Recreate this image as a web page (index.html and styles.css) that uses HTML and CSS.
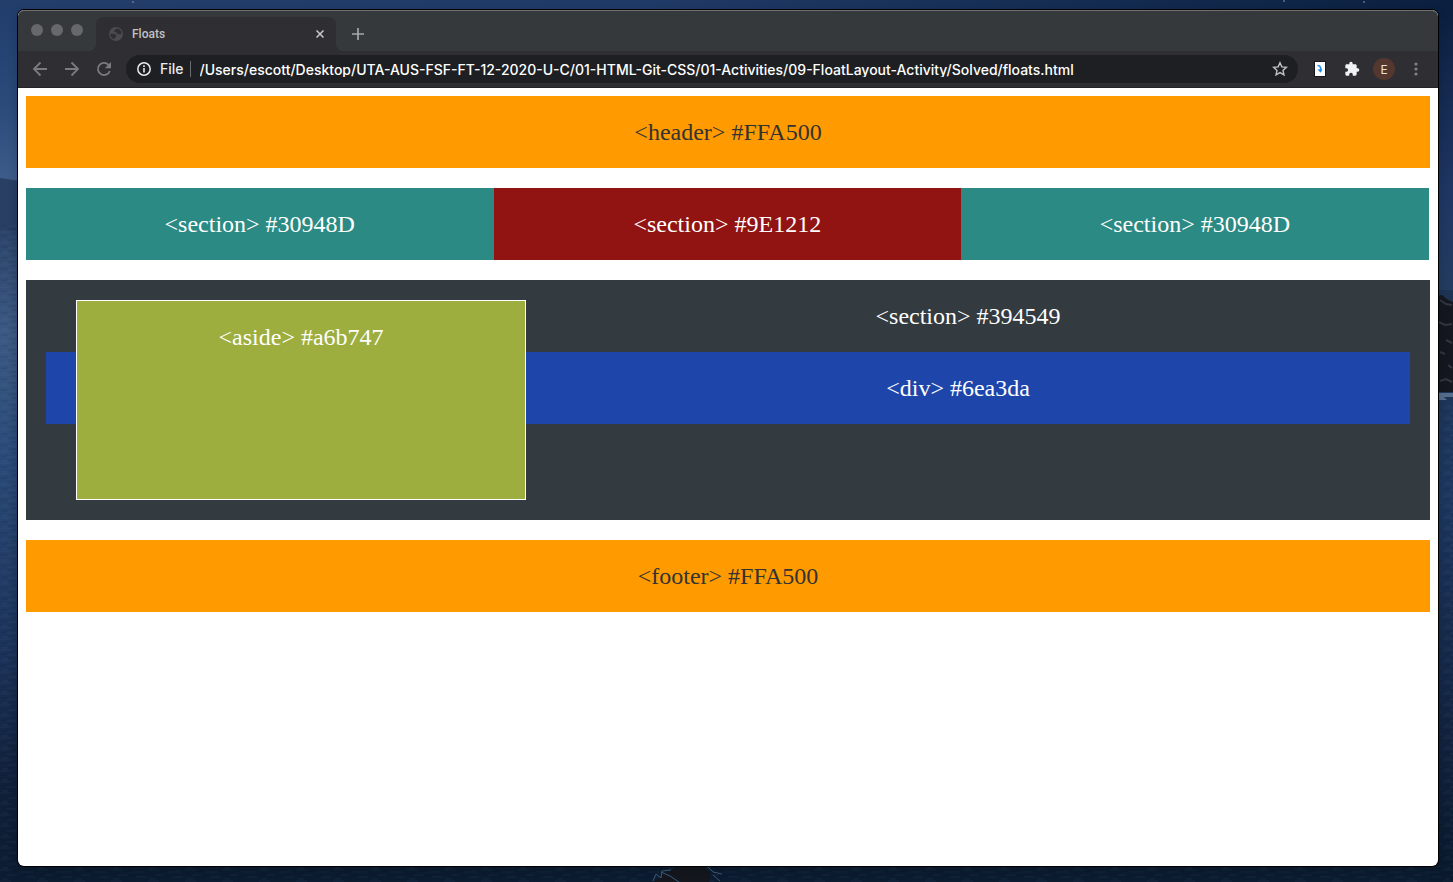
FILE: index.html
```html
<!DOCTYPE html>
<html lang="en">
<head>
<meta charset="utf-8">
<title>Floats</title>
<link rel="stylesheet" href="styles.css">
</head>
<body>
<svg class="wallpaper" viewBox="0 0 1453 882" preserveAspectRatio="none" aria-hidden="true">
  <defs>
    <linearGradient id="sky" x1="0" x2="1" y1="0" y2="0">
      <stop offset="0" stop-color="#233e6a"/><stop offset=".45" stop-color="#1f3a66"/><stop offset="1" stop-color="#0b2040"/>
    </linearGradient>
    <linearGradient id="leftsky" x1="0" x2="0" y1="0" y2="1">
      <stop offset="0" stop-color="#213e6c"/><stop offset=".45" stop-color="#2c4b7b"/><stop offset="1" stop-color="#4a6893"/>
    </linearGradient>
    <linearGradient id="leftsea" x1="0" x2="0" y1="0" y2="1">
      <stop offset="0" stop-color="#2c4369"/><stop offset=".16" stop-color="#3b5983"/><stop offset=".35" stop-color="#2b4a78"/><stop offset=".65" stop-color="#1b3258"/><stop offset=".85" stop-color="#10203a"/><stop offset="1" stop-color="#0c1c31"/>
    </linearGradient>
    <linearGradient id="rightsky" x1="0" x2="0" y1="0" y2="1">
      <stop offset="0" stop-color="#0b2040"/><stop offset=".6" stop-color="#1f3664"/><stop offset="1" stop-color="#243d60"/>
    </linearGradient>
    <linearGradient id="rightsea" x1="0" x2="0" y1="0" y2="1">
      <stop offset="0" stop-color="#1d3454"/><stop offset=".35" stop-color="#1d3760"/><stop offset=".75" stop-color="#12233f"/><stop offset="1" stop-color="#0a192c"/>
    </linearGradient>
    <pattern id="waves" width="37" height="11" patternUnits="userSpaceOnUse">
      <path d="M0 1h11M19 3h14M7 6h9M25 8h10M2 10h6" stroke="#7192bd" stroke-opacity=".09"/>
      <path d="M12 2h12M1 5h7M18 7h9M9 9h12" stroke="#020b1b" stroke-opacity=".14"/>
    </pattern>
  </defs>
  <rect width="1453" height="882" fill="#0c1c31"/>
  <rect width="1453" height="30" fill="url(#sky)"/>
  <rect y="10" width="60" height="220" fill="url(#leftsky)"/>
  <rect y="228" width="30" height="654" fill="url(#leftsea)"/>
  <path d="M0 178l20 3v50H0z" fill="#293f64"/>
  <rect x="1400" y="10" width="53" height="300" fill="url(#rightsky)"/>
  <rect x="1430" y="290" width="23" height="592" fill="url(#rightsea)"/>
  <path d="M1437 296l5-1 6 5 5 2v90h-16z" fill="#14171f"/>
  <path d="M1440 300l6 4 6 1M1439 322l6 3 7-1M1446 340l6 3M1440 352l5 2M1448 365l4 3M1440 381l6-2 6 3" fill="none" stroke="#303642" stroke-width="2"/>
  <path d="M1437 393h16v4h-9l3 3h-10z" fill="#566d8d"/>
  <path d="M0 225h18v657H0zM1438 405h15v477h-15zM18 866h1420v16H18z" fill="url(#waves)"/>
  <path d="M655 882l5-6 17-9h28l6 7-2 8z" fill="#14171e"/>
  <path d="M653 881l3-7 5 4 1-7 9-1M661 872l9 4 9 6M708 867l5 5 9 2M713 875l7 6" fill="none" stroke="#405b7a"/>
  <path d="M132 2h2M1283 1h2M1363 2h2" stroke="#8495ae"/>
</svg>

<div class="window">
  <div class="tabstrip">
    <div class="lights">
      <button class="light" aria-label="Close window"></button>
      <button class="light" aria-label="Minimize window"></button>
      <button class="light" aria-label="Zoom window"></button>
    </div>
    <div class="tab">
      <svg width="14" height="14" viewBox="0 0 14 14" aria-hidden="true">
        <circle cx="7" cy="7" r="7" fill="#4b4b50"/>
        <path d="M8 1.500L5.500 3v2l2.500.5.500 1.500 3 .5 1-1.500-.5-2L10 2zM1.500 6.500l3.500.5 2.500 1L7 10l-1.500 1v1.500L3 11 1.500 9z" fill="#2f2e33"/>
      </svg>
      <span class="tab-title">Floats</span>
      <button class="icon-button tab-close" aria-label="Close tab">
        <svg width="8" height="8" viewBox="0 0 8 8"><path d="M.5.5l7 7m0-7l-7 7" stroke="#c9cbce" stroke-width="1.500"/></svg>
      </button>
    </div>
    <button class="icon-button new-tab" aria-label="New tab">
      <svg width="12" height="12" viewBox="0 0 12 12"><path d="M6 0v12M0 6h12" stroke="#a5a8aa" stroke-width="1.700"/></svg>
    </button>
  </div>

  <div class="toolbar">
    <button class="icon-button" aria-label="Back">
      <svg width="16" height="16" viewBox="0 0 16 16"><path d="M15 8H2.500M8.500 1.500L2 8l6.500 6.500" fill="none" stroke="#7b7b80" stroke-width="1.800"/></svg>
    </button>
    <button class="icon-button" aria-label="Forward">
      <svg width="16" height="16" viewBox="0 0 16 16"><path d="M1 8h12.500M7.500 1.500L14 8l-6.500 6.500" fill="none" stroke="#7b7b80" stroke-width="1.800"/></svg>
    </button>
    <button class="icon-button" aria-label="Reload">
      <svg width="16" height="16" viewBox="0 0 16 16"><path d="M13.800 10a6.100 6.100 0 1 1-1.300-6.200L14 5.500" fill="none" stroke="#7b7b80" stroke-width="1.800"/><path d="M15 1v6.200H8.800z" fill="#7b7b80"/></svg>
    </button>
    <div class="omnibox">
      <svg class="info" width="14" height="14" viewBox="0 0 14 14" aria-hidden="true"><circle cx="7" cy="7" r="6.200" fill="none" stroke="#e8eaed" stroke-width="1.500"/><path d="M7 6v4.500M7 3.300v1.600" stroke="#e8eaed" stroke-width="1.600"/></svg>
      <label class="scheme" for="url">File</label>
      <input class="url" id="url" type="text" spellcheck="false" value="/Users/escott/Desktop/UTA-AUS-FSF-FT-12-2020-U-C/01-HTML-Git-CSS/01-Activities/09-FloatLayout-Activity/Solved/floats.html">
      <button class="icon-button" aria-label="Bookmark this page">
        <svg width="16" height="16" viewBox="0 0 16 16"><path d="M8 1.700l1.850 4.200 4.550.45-3.400 3.050.95 4.500L8 11.550 4.050 13.900l.95-4.500L1.600 6.350l4.550-.45z" fill="none" stroke="#bec1c5" stroke-width="1.400"/></svg>
      </button>
    </div>
    <div class="actions">
      <button class="icon-button" aria-label="Extension">
        <svg width="12" height="16" viewBox="0 0 12 16"><path d="M0 0h12v16H0z" fill="#15161a"/><path d="M1 1h10v14H1z" fill="#fff"/><path d="M3.500 4.500c3 0 3.500 2 3.200 6" fill="none" stroke="#248be9" stroke-width="1.700"/><path d="M3.500 8.500l3.200 3.200L8.300 8z" fill="#248be9"/></svg>
      </button>
      <button class="icon-button" aria-label="Extensions">
        <svg width="16" height="16" viewBox="0 0 24 24"><path d="M20.500 11H19V7c0-1.100-.9-2-2-2h-4V3.500a2.500 2.500 0 0 0-5 0V5H4c-1.100 0-2 .9-2 2v3.800h1.500a2.700 2.700 0 0 1 0 5.400H2V20c0 1.100.9 2 2 2h3.800v-1.500a2.700 2.700 0 0 1 5.400 0V22H17c1.100 0 2-.9 2-2v-4h1.500a2.500 2.500 0 0 0 0-5z" fill="#f1f2f4"/></svg>
      </button>
      <button class="avatar" aria-label="Profile">E</button>
      <button class="icon-button" aria-label="Menu">
        <svg width="4" height="14" viewBox="0 0 4 14"><g fill="#828286"><circle cx="2" cy="2" r="1.600"/><circle cx="2" cy="7" r="1.600"/><circle cx="2" cy="12" r="1.600"/></g></svg>
      </button>
    </div>
  </div>

  <div class="page">
    <header class="box orange">&lt;header&gt; #FFA500</header>
    <div class="columns">
      <section class="box teal">&lt;section&gt; #30948D</section>
      <section class="box red">&lt;section&gt; #9E1212</section>
      <section class="box teal">&lt;section&gt; #30948D</section>
    </div>
    <section class="box slate">
      <aside class="box green">&lt;aside&gt; #a6b747</aside>
      <p class="slate-title">&lt;section&gt; #394549</p>
      <div class="box blue">&lt;div&gt; #6ea3da</div>
    </section>
    <footer class="box orange">&lt;footer&gt; #FFA500</footer>
  </div>
</div>
</body>
</html>
```
FILE: styles.css
```css
* {
  box-sizing: border-box;
}

body {
  margin: 0;
  min-height: 100vh;
  padding: 10px 15px 16px 18px;
  display: flex;
  background: #0c1c31;
  font-family: Inter, Roboto, sans-serif;
}

button,
input {
  border: 0;
  padding: 0;
  background: none;
  font: inherit;
  color: inherit;
}

svg {
  display: block;
}

.wallpaper {
  position: absolute;
  inset: 0;
  width: 100%;
  height: 100%;
  z-index: -1;
}

.window {
  flex: 1;
  min-width: 0;
  display: flex;
  flex-direction: column;
  border-radius: 6px;
  overflow: hidden;
  background: #fff;
  box-shadow: 0 0 0 1px #000, 0 4px 12px rgba(0, 0, 0, 0.2);
}

.tabstrip {
  height: 41px;
  display: flex;
  align-items: flex-end;
  border-radius: 6px 6px 0 0;
  background: #35393c;
  box-shadow: inset 0 1px #6d7173;
}

.lights {
  width: 78px;
  height: 41px;
  padding: 14px 0 0 13px;
  display: flex;
  gap: 8px;
}

.light {
  width: 12px;
  height: 12px;
  border-radius: 50%;
  background: #66686a;
}

.tab {
  width: 240px;
  height: 34px;
  padding: 0 8px 0 13px;
  display: flex;
  align-items: center;
  gap: 9px;
  position: relative;
  border-radius: 8px 8px 0 0;
  background: #2f2e33;
}

.tab::before,
.tab::after {
  content: "";
  position: absolute;
  bottom: 0;
  width: 8px;
  height: 8px;
}

.tab::before {
  right: 100%;
  background: radial-gradient(circle at 0 0, #35393c 8px, #2f2e33 8px);
}

.tab::after {
  left: 100%;
  background: radial-gradient(circle at 100% 0, #35393c 8px, #2f2e33 8px);
}

.tab-title {
  flex: 1;
  font-family: Roboto, sans-serif;
  font-size: 12px;
  font-weight: 500;
  color: #c0c2c5;
}

.icon-button {
  width: 16px;
  height: 16px;
  display: flex;
  align-items: center;
  justify-content: center;
}

.new-tab {
  margin: 0 0 9px 14px;
}

.toolbar {
  height: 37px;
  padding: 0 14px;
  display: flex;
  align-items: center;
  gap: 16px;
  background: #2f2e33;
  border-bottom: 1px solid #232326;
}

.omnibox {
  flex: 1;
  min-width: 0;
  height: 28px;
  margin-left: -2px;
  padding: 0 10px 0 11px;
  display: flex;
  align-items: center;
  border-radius: 14px;
  background: #1e1f23;
  font-size: 14px;
  font-weight: 500;
  color: #fff;
}

.scheme {
  margin-left: 9px;
  padding-right: 6px;
  border-right: 1px solid #6b6c70;
  line-height: 16px;
  color: #e8eaed;
}

.url {
  flex: 1;
  min-width: 0;
  height: 16px;
  margin-left: 9px;
  outline: 0;
}

.actions {
  display: flex;
  align-items: center;
  gap: 16px;
  margin-left: -2px;
}

.avatar {
  width: 22px;
  height: 22px;
  margin: 0 -3px;
  border-radius: 50%;
  background: #54372e;
  color: #e8e0dd;
  font-size: 12px;
}

.page {
  flex: 1;
  padding: 8px;
  display: flex;
  flex-direction: column;
  gap: 20px;
  font-family: "Liberation Serif", "Times New Roman", serif;
  font-size: 24px;
  line-height: 32px;
  text-align: center;
  color: #fff;
}

.box {
  padding: 20px;
}

.orange {
  background: #ff9b00;
  color: #333333;
}

.columns {
  display: grid;
  grid-template-columns: repeat(3, 33.3%);
}

.teal {
  background: #2b8a83;
}

.red {
  background: #911312;
}

.slate {
  display: flow-root;
  background: #333a40;
}

.green {
  float: left;
  width: 33%;
  height: 200px;
  margin-left: 30px;
  border: 1px solid #fff;
  background: #9dae3f;
}

.slate-title {
  margin: 0 0 20px;
}

.blue {
  background: #1d45aa;
}
```
